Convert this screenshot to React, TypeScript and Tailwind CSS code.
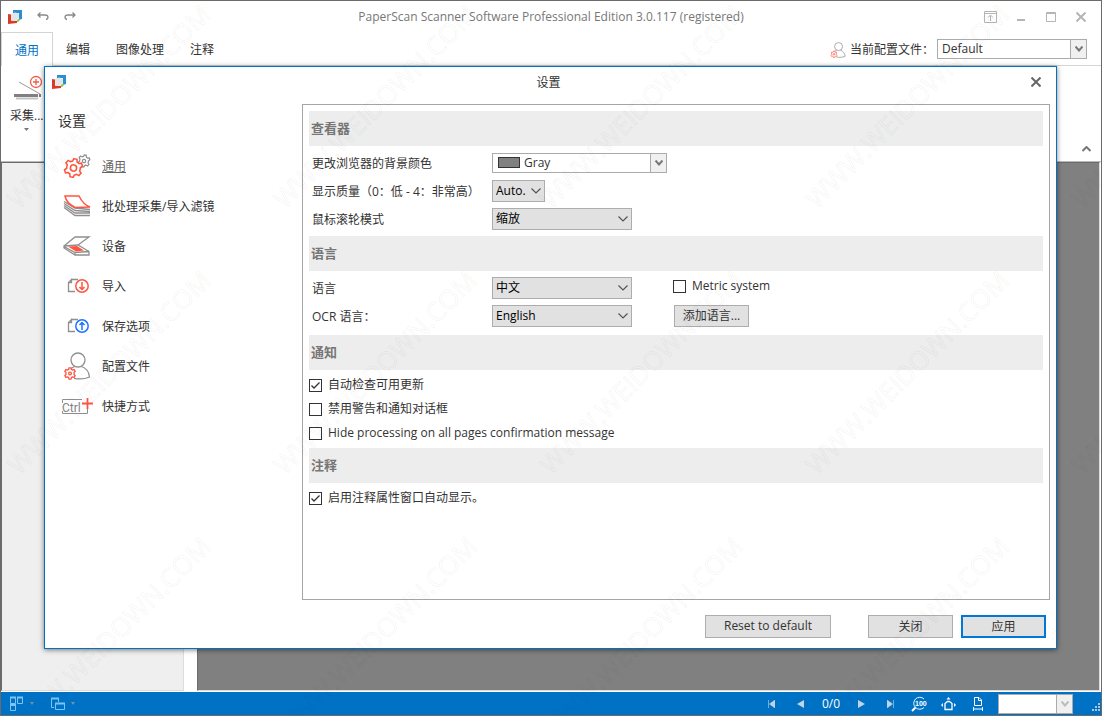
import { useState } from 'react';
import type { ReactNode } from 'react';
import clsx from 'clsx';

const GEAR =
  'M-1.8 -10 H1.8 L2.5 -7.2 A7.4 7.4 0 0 1 4.6 -6 L7.4 -6.9 L9.2 -3.9 L7.2 -1.8 A7.4 7.4 0 0 1 7.2 1.8 L9.2 3.9 L7.4 6.9 L4.6 6 A7.4 7.4 0 0 1 2.5 7.2 L1.8 10 H-1.8 L-2.5 7.2 A7.4 7.4 0 0 1 -4.6 6 L-7.4 6.9 L-9.2 3.9 L-7.2 1.8 A7.4 7.4 0 0 1 -7.2 -1.8 L-9.2 -3.9 L-7.4 -6.9 L-4.6 -6 A7.4 7.4 0 0 1 -2.5 -7.2 Z';

function Logo() {
  return (
    <svg width="14" height="14" viewBox="0 0 14 14">
      <path d="M5 0H14V9L11 10V3H5Z" fill="#2a8fd0" />
      <path d="M0 4L3 4.500V10.500L9 11V13L0 14Z" fill="#dd3a26" />
      <path d="M9 9.500L12 8.500L11 11.500L9 12Z" fill="#8cc63f" />
      <path d="M3 4L7 2.500L11 3.500V7C10.500 9.500 9 11 6 11H3.500Z" fill="#e3e6e8" />
    </svg>
  );
}

function GearsIcon() {
  return (
    <svg width="28" height="24" viewBox="0 0 28 24" fill="none">
      <g transform="translate(21 7) rotate(12) scale(.6)" stroke="#8f8f8f" strokeWidth="2">
        <path d={GEAR} />
        <circle r="2.800" />
      </g>
      <g transform="translate(10.500 14) rotate(12) scale(.92)" stroke="#ff5540" strokeWidth="1.700">
        <path d={GEAR} fill="#fff" />
        <circle r="3.400" />
      </g>
    </svg>
  );
}

function BatchIcon() {
  return (
    <svg width="28" height="22" viewBox="0 0 28 22" fill="none">
      <path d="M1 6.500L12 13L27 14.500M1 8.500L12 15.500L27 16.500M1 10.500L12 18H27M1 12.500L12 20.500H27" stroke="#8f8f8f" strokeWidth="1.300" />
      <path d="M2 1H16C18 5 21 10 27 12L12 12.500C7 10 3 6 2 1Z" fill="#fff" stroke="#ff5540" strokeWidth="1.500" />
    </svg>
  );
}

function DeviceIcon() {
  return (
    <svg width="28" height="21" viewBox="0 0 28 21" fill="none">
      <path d="M1 10L12 1H26L15 9" stroke="#8f8f8f" strokeWidth="1.300" />
      <path d="M1 10L15 9L26 15.500V19H12L1 12ZM1 10.500L12 16.500L26 15.500M12 16.500V19" stroke="#8f8f8f" strokeWidth="1.300" />
      <path d="M5 10.500L14 10L21 14.500L13 15.500Z" fill="#ff5540" />
    </svg>
  );
}

function FileIcon({ up }: { up?: boolean }) {
  const tint = up ? '#1f74ff' : '#ff5540';
  return (
    <svg width="24" height="16" viewBox="-2 0 24 16" fill="none">
      <path d="M4 1.500H11M8 13.500H1.500V4.500L4.500 1.500V4.500H2" stroke="#8f8f8f" strokeWidth="1.300" />
      <circle cx="15" cy="8" r="6.200" fill="#fff" stroke={tint} strokeWidth="1.500" />
      {up ? (
        <path d="M15 12V5M12.500 7L15 4.500L17.500 7" stroke={tint} strokeWidth="1.500" />
      ) : (
        <path d="M15 4V11M12.500 9L15 11.500L17.500 9" stroke={tint} strokeWidth="1.500" />
      )}
    </svg>
  );
}

function UserIcon({ size = 28 }: { size?: number }) {
  return (
    <svg width={size} height={size} viewBox="0 0 28 28" fill="none">
      <circle cx="15" cy="8" r="7" stroke="#8f8f8f" strokeWidth="1.300" />
      <path d="M18.500 14.500C23 16 26 20 26.500 25C22 27 16 27.300 11 26.300M11.500 14.500L8 16.500" stroke="#8f8f8f" strokeWidth="1.300" />
      <g transform="translate(7 21.500) scale(.56)" stroke="#ff5540" strokeWidth="2.300">
        <path d={GEAR} fill="#fff" />
        <circle r="2.500" />
      </g>
    </svg>
  );
}

function CtrlIcon() {
  return (
    <svg width="32" height="18" viewBox="0 0 32 18" fill="none">
      <path d="M21 2.500H1.500V6M1.500 14V16.500H26.500V12" stroke="#8f8f8f" />
      <text x="1" y="15" fontSize="12" fontFamily="Roboto, sans-serif" fill="#858585">Ctrl</text>
      <path d="M26.500 1V12M21 6.500H32" stroke="#ff5540" strokeWidth="1.800" />
    </svg>
  );
}

function Chevron() {
  return (
    <svg width="10" height="6" viewBox="0 0 10 6" className="pointer-events-none absolute right-1 top-2">
      <path d="M.5 .5L5 5L9.500 .5" fill="none" stroke="#555" strokeWidth="1.200" />
    </svg>
  );
}

function Select({ id, value, width }: { id: string; value: string; width: string }) {
  return (
    <div className={clsx('relative h-[22px]', width)}>
      <select id={id} className="block h-full w-full appearance-none border border-[#adadad] bg-[#e1e1e1] pl-[3px] text-xs text-black">
        <option>{value}</option>
      </select>
      <Chevron />
    </div>
  );
}

// combo box with a separate arrow button, used for profile, colour and zoom
function Combo({ id, value, width, label, swatch, faded }: { id?: string; value: string; width: string; label?: string; swatch?: boolean; faded?: boolean }) {
  return (
    <div className={clsx('relative h-5 shrink-0', width)}>
      <select id={id} aria-label={label} className={clsx('block h-full w-full appearance-none border border-[#ababab] bg-white text-xs text-[#333]', swatch ? 'pl-[31px]' : 'pl-1')}>
        <option>{value}</option>
      </select>
      {swatch && <span className="absolute left-[6px] top-1 h-[11px] w-[22px] border border-[#333] bg-[#808080]" />}
      <span className="pointer-events-none absolute inset-y-0 right-0 flex w-[17px] items-center justify-center border border-[#ababab] bg-[#f0f0f0]">
        <svg width="8" height="6" viewBox="0 0 8 6">
          <path d="M.5 .5L4 4.500L7.500 .5" fill="none" stroke={faded ? '#bbb' : '#777'} strokeWidth="2" />
        </svg>
      </span>
    </div>
  );
}

function Check({ label, defaultChecked }: { label: string; defaultChecked?: boolean }) {
  return (
    <label className="flex h-6 items-center gap-[6px]">
      <span className="relative h-[13px] w-[13px]">
        <input type="checkbox" defaultChecked={defaultChecked} className="peer block h-[13px] w-[13px] appearance-none border border-[#333] bg-white" />
        <svg width="13" height="13" viewBox="0 0 13 13" className="pointer-events-none absolute inset-0 hidden peer-checked:block">
          <path d="M2.500 6.500L5 9L10.500 3.500" fill="none" stroke="#333" strokeWidth="1.300" />
        </svg>
      </span>
      {label}
    </label>
  );
}

function Section({ title, children }: { title: string; children: ReactNode }) {
  return (
    <section>
      <h3 className="flex h-[35px] items-center bg-[#ededed] pl-[2px] text-[13px] font-bold text-[#767676]">{title}</h3>
      <div className="py-[3px]">{children}</div>
    </section>
  );
}

function Row({ id, label, children }: { id: string; label: string; children: ReactNode }) {
  return (
    <div className="flex h-7 items-center pl-[3px]">
      <label htmlFor={id} className="w-[180px] shrink-0 whitespace-nowrap pt-[2px]">{label}</label>
      {children}
    </div>
  );
}

const navItems = [
  { name: '通用', icon: <GearsIcon /> },
  { name: '批处理采集/导入滤镜', icon: <BatchIcon /> },
  { name: '设备', icon: <DeviceIcon /> },
  { name: '导入', icon: <FileIcon /> },
  { name: '保存选项', icon: <FileIcon up /> },
  { name: '配置文件', icon: <UserIcon /> },
  { name: '快捷方式', icon: <CtrlIcon /> },
];

const tabs = ['编辑', '图像处理', '注释'];

function SettingsDialog() {
  const [active, setActive] = useState('通用');

  return (
    <div role="dialog" aria-label="设置" className="absolute bottom-[66px] left-[43px] right-11 top-[65px] flex flex-col border border-[#0072c6] bg-white shadow-[0_1px_5px_rgba(0,0,0,0.5)]">
      <header className="flex h-[37px] shrink-0 items-start justify-between pl-[7px] pr-[15px] pt-2">
        <Logo />
        <h1 className="text-xs">设置</h1>
        <button aria-label="Close" className="pt-[2px]">
          <svg width="10" height="10" viewBox="0 0 10 10">
            <path d="M.5 .5L9.500 9.500M9.500 .5L.5 9.500" stroke="#666" strokeWidth="2" />
          </svg>
        </button>
      </header>

      <div className="flex flex-1">
        <aside className="w-[257px] shrink-0">
          <h2 className="h-[42px] pl-[13px] pt-[7px] text-sm">设置</h2>
          <nav>
            {navItems.map((item) => (
              <button
                key={item.name}
                onClick={() => setActive(item.name)}
                className={clsx('flex h-10 w-full items-center gap-[9px] pl-4', active === item.name && 'text-[#666] underline')}
              >
                <span className="flex w-8 justify-center">{item.icon}</span>
                <span className="pt-[2px]">{item.name}</span>
              </button>
            ))}
          </nav>
        </aside>

        <main className="mr-[6px] flex-1 border border-[#a5a5a5] p-[6px]">
          <Section title="查看器">
            <Row id="color" label="更改浏览器的背景颜色">
              <Combo id="color" value="Gray" width="w-[175px]" swatch />
            </Row>
            <Row id="quality" label="显示质量（0：低 - 4：非常高）">
              <Select id="quality" value="Auto." width="w-[53px]" />
            </Row>
            <Row id="wheel" label="鼠标滚轮模式">
              <Select id="wheel" value="缩放" width="w-[140px]" />
            </Row>
          </Section>
          <Section title="语言">
            <Row id="lang" label="语言">
              <Select id="lang" value="中文" width="w-[140px]" />
              <div className="ml-[41px] self-start">
                <Check label="Metric system" />
              </div>
            </Row>
            <div className="pb-[2px]">
              <Row id="ocr" label="OCR 语言：">
                <Select id="ocr" value="English" width="w-[140px]" />
                <button className="ml-[42px] h-[22px] w-[75px] border border-[#adadad] bg-[#e1e1e1]">添加语言...</button>
              </Row>
            </div>
          </Section>
          <Section title="通知">
            <Check label="自动检查可用更新" defaultChecked />
            <Check label="禁用警告和通知对话框" />
            <Check label="Hide processing on all pages confirmation message" />
          </Section>
          <Section title="注释">
            <Check label="启用注释属性窗口自动显示。" defaultChecked />
          </Section>
        </main>
      </div>

      <footer className="flex h-12 shrink-0 items-center justify-end gap-2 pr-[10px] pt-1">
        <button className="mr-[29px] h-[23px] w-[126px] border border-[#adadad] bg-[#e1e1e1]">Reset to default</button>
        <button className="h-[23px] w-[85px] border border-[#adadad] bg-[#e1e1e1] pt-[2px]">关闭</button>
        <button className="h-[23px] w-[85px] border-2 border-[#0078d7] bg-[#e1e1e1] pt-[2px]">应用</button>
      </footer>
    </div>
  );
}

function StatusBar() {
  return (
    <footer className="flex h-[23px] shrink-0 items-center justify-between bg-[#0072c6] pl-2 text-white">
      <div className="flex items-center gap-4">
        <button aria-label="Thumbnails" className="flex items-center gap-[6px]">
          <svg width="15" height="15" viewBox="0 0 15 15" fill="none" stroke="#7cc4f5">
            <path d="M1.500 1.500H6.500V7.500H1.500ZM8.500 1.500H13.500V7.500H8.500ZM1.500 9.500H6.500V14.500H1.500Z" />
            <path d="M1 1.500H7M8 1.500H14M1 9H7" strokeWidth="2" />
          </svg>
          <svg width="4" height="3"><path d="M0 0H4L2 3Z" fill="#7f8f9d" /></svg>
        </button>
        <button aria-label="Windows" className="flex items-center gap-[6px]">
          <svg width="15" height="14" viewBox="0 0 15 14" fill="none" stroke="#7cc4f5">
            <path d="M4 10.500H1.500V1.500H8.500V5M5.500 6.500H14.500V12.500H5.500Z" />
            <path d="M1 1.500H9M5 6.500H15" strokeWidth="2" />
          </svg>
          <svg width="4" height="3"><path d="M0 0H4L2 3Z" fill="#7f8f9d" /></svg>
        </button>
      </div>
      <div className="flex items-center">
        <button aria-label="First page" className="flex w-[29px] justify-center">
          <svg width="7" height="8"><path d="M.5 0V8M7 0V8L1.500 4Z" fill="#c5d3df" stroke="#c5d3df" strokeWidth=".6" /></svg>
        </button>
        <button aria-label="Previous page" className="flex w-[29px] justify-center">
          <svg width="7" height="8"><path d="M7 0V8L0 4Z" fill="#c5d3df" /></svg>
        </button>
        <span className="w-8 text-center">0/0</span>
        <button aria-label="Next page" className="flex w-[29px] justify-center">
          <svg width="7" height="8"><path d="M0 0V8L7 4Z" fill="#c5d3df" /></svg>
        </button>
        <button aria-label="Last page" className="flex w-[29px] justify-center">
          <svg width="7" height="8"><path d="M6.500 0V8M0 0V8L5.500 4Z" fill="#c5d3df" stroke="#c5d3df" strokeWidth=".6" /></svg>
        </button>
        <button aria-label="Actual size" className="flex w-[29px] justify-center">
          <svg width="17" height="16" viewBox="0 0 17 16" fill="none">
            <path d="M13 3A6 6 0 1 0 13 11.500" stroke="#e8f3fb" />
            <path d="M4.500 11.500L1 15" stroke="#fff" strokeWidth="2" />
            <text x="4" y="9.500" fontSize="7" fontWeight="bold" fontFamily="'Liberation Sans', sans-serif" fill="#fff">100</text>
          </svg>
        </button>
        <button aria-label="Fit page" className="flex w-[29px] justify-center">
          <svg width="15" height="14" viewBox="0 0 15 14" fill="none" stroke="#fff">
            <path d="M4 6.500V12.500H11V6.500L8.500 4.500H6.500Z" strokeWidth="1.300" />
            <path d="M5.500 2.500L7.500 0L9.500 2.500ZM2 6L0 8L2 10ZM13 6L15 8L13 10Z" fill="#fff" stroke="none" />
          </svg>
        </button>
        <button aria-label="Fit width" className="flex w-[29px] justify-center">
          <svg width="10" height="15" viewBox="0 0 10 15" fill="none" stroke="#fff">
            <path d="M1.500 1.500H6L8.500 4V9.500H1.500ZM5.500 1.500V4.500H8.500M.5 11V15M9.500 11V15M.5 13H9.500" />
          </svg>
        </button>
        <div className="ml-[6px]">
          <Combo label="Zoom" value="" width="w-[75px]" faded />
        </div>
        <svg width="9" height="9" viewBox="0 0 9 9" fill="#a9c9e2" className="ml-[18px] mr-[1px] mt-2">
          <path d="M7 0H9V2H7ZM7 3H9V5H7ZM7 6H9V8H7ZM4 3H6V5H4ZM4 6H6V8H4ZM1 6H3V8H1Z" />
        </svg>
      </div>
    </footer>
  );
}

function Watermark() {
  return (
    <svg aria-hidden="true" className="pointer-events-none absolute inset-0 h-full w-full">
      {[0, 1, 2].map((r) =>
        [0, 1, 2, 3, 4].map((c) => (
          <text
            key={`${r}-${c}`}
            transform={`translate(${18 + c * 266} ${209 + r * 266}) rotate(-45)`}
            fontSize="26"
            fontFamily="'Open Sans', sans-serif"
            fill="none"
            stroke="#000"
            strokeOpacity=".05"
          >
            WWW.WEIDOWN.COM
          </text>
        )),
      )}
    </svg>
  );
}

export default function App() {
  return (
    <div className="relative flex min-h-screen flex-col overflow-hidden border border-[#6b6b6b] bg-white font-['Open_Sans','Noto_Sans_CJK_SC',sans-serif] text-xs text-[#333]">
      <header className="flex h-[31px] shrink-0 items-center justify-between pl-[7px] pr-[15px]">
        <div className="flex w-[110px] items-center gap-[15px]">
          <Logo />
          <button aria-label="Undo">
            <svg width="12" height="9" viewBox="0 0 12 9" fill="none" stroke="#888" strokeWidth="1.300">
              <path d="M3.500 .5L1 3L3.500 5.500M1 3H8C12 3 11.500 7 9 7.500" />
            </svg>
          </button>
          <button aria-label="Redo">
            <svg width="12" height="9" viewBox="0 0 12 9" fill="none" stroke="#888" strokeWidth="1.300">
              <path d="M8.500 .5L11 3L8.500 5.500M11 3H4C0 3 .5 7 3 7.500" />
            </svg>
          </button>
        </div>
        <span className="text-[#777]">PaperScan Scanner Software Professional Edition 3.0.117 (registered)</span>
        <div className="flex items-center gap-5">
          <button aria-label="Ribbon options">
            <svg width="13" height="12" viewBox="0 0 13 12" fill="none" stroke="#b5b5b5">
              <path d="M.5 .5H12.500V11.500H.5ZM.5 2.500H12.500M6.500 10V4.500M4 6.500L6.500 4L9 6.500" />
            </svg>
          </button>
          <button aria-label="Minimize">
            <svg width="9" height="11"><path d="M0 9H8" stroke="#b5b5b5" strokeWidth="2" /></svg>
          </button>
          <button aria-label="Maximize">
            <svg width="10" height="10"><path d="M.5 .5H9.500V9.500H.5ZM0 1.500H10" fill="none" stroke="#b5b5b5" /></svg>
          </button>
          <button aria-label="Close window">
            <svg width="10" height="10"><path d="M.5 .5L9.500 9.500M9.500 .5L.5 9.500" stroke="#b5b5b5" strokeWidth="2" /></svg>
          </button>
        </div>
      </header>

      <div className="flex h-[34px] shrink-0">
        <button className="border-x border-t border-[#d4d4d4] px-[13px] pt-[2px] text-[#0072c6]">通用</button>
        <div className="flex flex-1 items-center border-b border-[#d4d4d4] pr-[14px]">
          {tabs.map((tab) => (
            <button key={tab} className="px-[13px] pt-[3px]">{tab}</button>
          ))}
          <label htmlFor="profile" className="ml-auto flex items-center gap-1 pt-[2px]">
            <UserIcon size={16} />
            当前配置文件：
          </label>
          <div className="ml-[3px]">
            <Combo id="profile" value="Default" width="w-[150px]" />
          </div>
        </div>
      </div>

      <div className="flex h-24 shrink-0 items-start justify-between border-b border-[#bbb] pl-[9px]">
        <button className="flex flex-col items-center pt-[9px]">
          <svg width="30" height="27" viewBox="0 0 30 27" fill="none">
            <path d="M7 7L28 19" stroke="#999" />
            <circle cx="24" cy="7" r="5.500" fill="#fff" stroke="#f25b4a" strokeWidth="1.300" />
            <path d="M24 4V10M21 7H27" stroke="#f25b4a" strokeWidth="1.300" />
            <path d="M2 20.500H26M27 20.500H29" stroke="#808080" strokeWidth="3" />
            <path d="M4 23.500H26" stroke="#c4c4c4" strokeWidth="2" />
          </svg>
          <span className="pt-[6px]">采集...</span>
          <svg width="5" height="3" className="mt-1"><path d="M0 0H5L2.500 3Z" fill="#777" /></svg>
        </button>
        <button aria-label="Collapse ribbon" className="mr-[10px] mt-[80px]">
          <svg width="9" height="6"><path d="M.5 5L4.500 1L8.500 5" fill="none" stroke="#777" strokeWidth="2" /></svg>
        </button>
      </div>

      <div className="flex flex-1 gap-[13px] pb-[1px] pr-[1px]">
        <div className="w-[183px] border border-b-[#ddd] border-l-[#6b6b6b] border-r-[#ddd] border-t-[#6b6b6b] bg-[#efefef]" />
        <div className="flex-1 border border-b-[#ddd] border-l-[#6b6b6b] border-r-[#ddd] border-t-[#6b6b6b] bg-[#808080]" />
      </div>

      <StatusBar />
      <SettingsDialog />
      <Watermark />
    </div>
  );
}
